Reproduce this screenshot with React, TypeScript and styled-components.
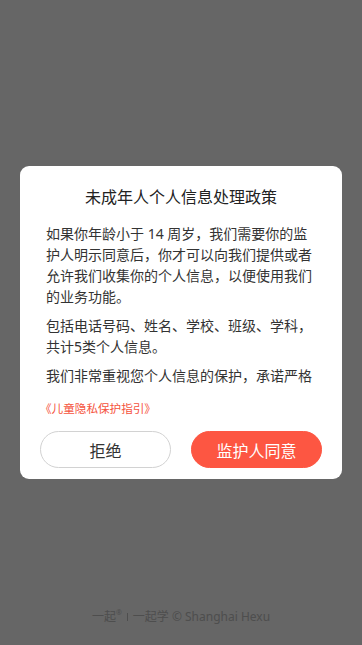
import React from "react";
import styled, { createGlobalStyle } from "styled-components";

const Global = createGlobalStyle`
  html, body { margin: 0; padding: 0; height: 100%; }
  body { font-family: "Noto Sans", "Noto Sans CJK SC", sans-serif; background: #fff; }
  #root { height: 100%; }
`;

const Page = styled.div`
  height: 100vh;
  display: flex;
  flex-direction: column;
  justify-content: flex-end;
  align-items: center;
  padding-bottom: 19px;
  box-sizing: border-box;
`;

const Footer = styled.div`
  display: flex;
  align-items: center;
  gap: 3px;
  font-size: 12px;
  line-height: 18px;
  color: #c2c2c2;
`;

const Sup = styled.sup`
  font-size: 7px;
  line-height: 0;
  vertical-align: 6px;
`;

const Sep = styled.span`
  display: inline-block;
  width: 1px;
  height: 8px;
  background: #c2c2c2;
  margin: 0 2px;
`;

const Mask = styled.div`
  position: fixed;
  inset: 0;
  background: rgba(0, 0, 0, 0.6);
  display: flex;
  align-items: center;
  justify-content: center;
`;

const Dialog = styled.div`
  width: 322px;
  background: #fff;
  border-radius: 9px;
  padding: 20px 20px 11px;
  box-sizing: border-box;
  display: flex;
  flex-direction: column;
`;

const Title = styled.h2`
  margin: 0;
  font-size: 16px;
  line-height: 22px;
  font-weight: 400;
  color: #222;
  text-align: center;
`;

const Body = styled.div`
  margin-top: 15px;
  height: 167px;
  overflow: hidden;
  padding: 0 5px 0 6px;
`;

const Para = styled.p`
  margin: 0 0 8px;
  font-size: 14px;
  line-height: 21px;
  color: #333;
`;

const Link = styled.a`
  align-self: flex-start;
  margin-top: 10px;
  font-size: 11.6px;
  line-height: 17px;
  color: #f5533d;
  text-decoration: none;
`;

const Actions = styled.div`
  margin-top: 14px;
  display: grid;
  grid-template-columns: 1fr 1fr;
  gap: 20px;
`;

const Button = styled.button<{ $primary?: boolean }>`
  height: 37px;
  border-radius: 19px;
  font-family: inherit;
  font-size: 16px;
  cursor: pointer;
  box-sizing: border-box;
  border: 1px solid ${(p) => (p.$primary ? "#fd5642" : "#d2d2d2")};
  background: ${(p) => (p.$primary ? "#fd5642" : "#fff")};
  color: ${(p) => (p.$primary ? "#fff" : "#333")};
`;

export default function App() {
  return (
    <>
      <Global />
      <Page>
        <Footer>
          <span>
            一起<Sup>®</Sup>
          </span>
          <Sep />
          <span>一起学 © Shanghai Hexu</span>
        </Footer>
      </Page>
      <Mask>
        <Dialog>
          <Title>未成年人个人信息处理政策</Title>
          <Body>
            <Para>
              如果你年龄小于 14 周岁，我们需要你的监护人明示同意后，你才可以向我们提供或者允许我们收集你的个人信息，以便使用我们的业务功能。
            </Para>
            <Para>包括电话号码、姓名、学校、班级、学科，共计5类个人信息。</Para>
            <Para>
              我们非常重视您个人信息的保护，承诺严格按照相关法律法规的要求，保护您的个人信息安全。
            </Para>
          </Body>
          <Link href="#">《儿童隐私保护指引》</Link>
          <Actions>
            <Button>拒绝</Button>
            <Button $primary>监护人同意</Button>
          </Actions>
        </Dialog>
      </Mask>
    </>
  );
}
